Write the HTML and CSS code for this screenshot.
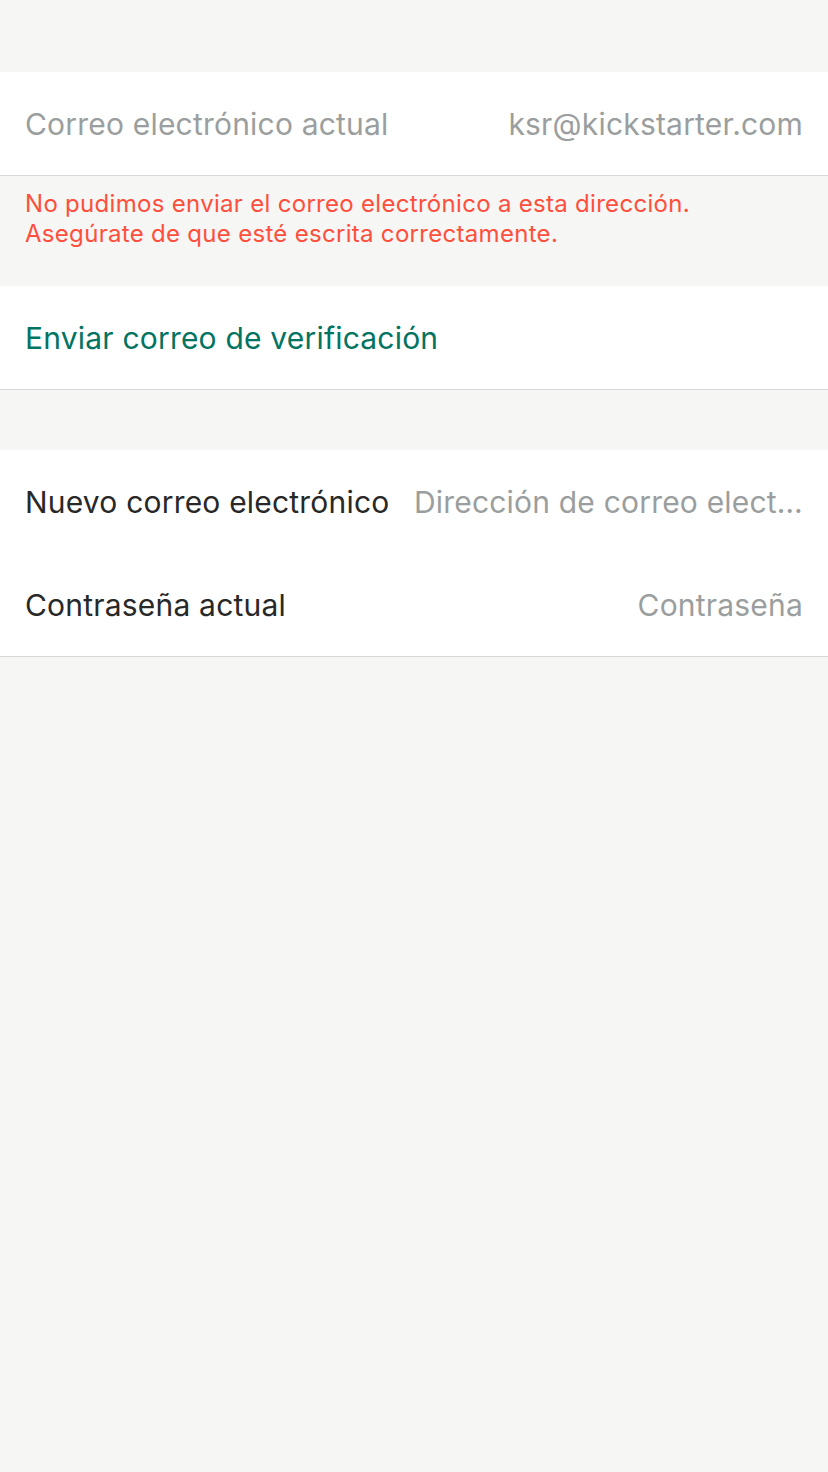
FILE: index.html
```html
<!DOCTYPE html>
<html lang="es">
<head>
<meta charset="utf-8">
<link rel="stylesheet" href="styles.css">
</head>
<body>
<div class="page">
  <div class="spacer-top"></div>
  <section class="group">
    <div class="row">
      <span class="label muted">Correo electrónico actual</span>
      <span class="value muted">ksr@kickstarter.com</span>
    </div>
  </section>
  <div class="error">
    <p>No pudimos enviar el correo electrónico a esta dirección.</p>
    <p>Asegúrate de que esté escrita correctamente.</p>
  </div>
  <section class="group">
    <div class="row">
      <span class="label action">Enviar correo de verificación</span>
    </div>
  </section>
  <div class="spacer-mid"></div>
  <section class="group">
    <div class="row">
      <span class="label">Nuevo correo electrónico</span>
      <span class="value muted">Dirección de correo elect…</span>
    </div>
    <div class="row">
      <span class="label">Contraseña actual</span>
      <span class="value muted">Contraseña</span>
    </div>
  </section>
</div>
</body>
</html>
```

FILE: styles.css
```css
html, body {
  margin: 0;
  padding: 0;
  background: #f6f6f4;
}
body {
  font-family: Inter, "Noto Sans", sans-serif;
  width: 828px;
  height: 1472px;
  overflow: hidden;
}
.spacer-top { height: 72px; }
.spacer-mid { height: 60px; }
.group {
  background: #ffffff;
  border-bottom: 1px solid #d8d8d8;
}
.row {
  height: 103px;
  display: flex;
  align-items: center;
  justify-content: space-between;
  padding: 0 25px;
  gap: 20px;
  font-size: 30px;
  letter-spacing: 0.2px;
  color: #282828;
}
.label { white-space: nowrap; flex: none; }
.value {
  white-space: nowrap;
  min-width: 0;
  text-align: right;
}
.muted { color: #9b9e9e; }
.action { color: #037362; }
.error {
  padding: 13px 25px 0;
  height: 110px;
  box-sizing: border-box;
  color: #ff4f3c;
  font-size: 24px;
  letter-spacing: 0.3px;
  line-height: 30px;
}
.error p { margin: 0; }
```
